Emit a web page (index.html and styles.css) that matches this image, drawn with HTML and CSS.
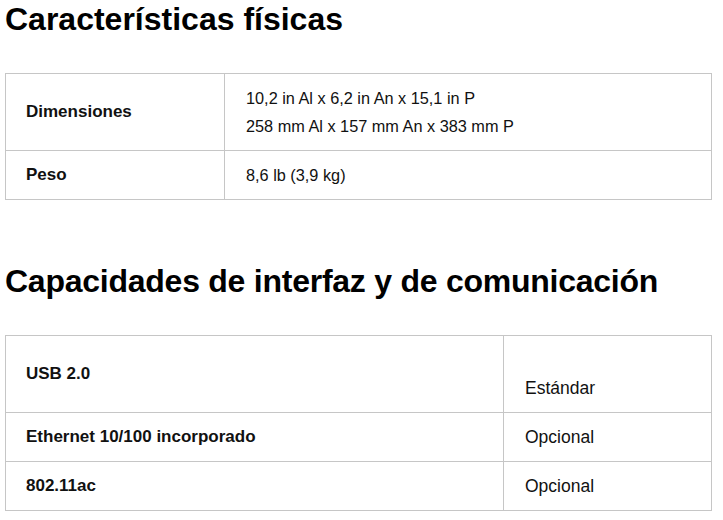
FILE: index.html
```html
<!DOCTYPE html>
<html lang="es">
<head>
<meta charset="utf-8">
<title>Especificaciones</title>
<link rel="stylesheet" href="styles.css">
</head>
<body>
<main class="page">
  <section class="spec">
    <h2 class="spec-title">Características físicas</h2>
    <table class="spec-table spec-table--phys">
      <colgroup><col class="c-label-a"><col class="c-value-a"></colgroup>
      <tbody>
        <tr>
          <th>Dimensiones</th>
          <td>10,2 in Al x 6,2 in An x 15,1 in P<br>258 mm Al x 157 mm An x 383 mm P</td>
        </tr>
        <tr>
          <th>Peso</th>
          <td>8,6 lb (3,9 kg)</td>
        </tr>
      </tbody>
    </table>
  </section>
  <section class="spec spec--second">
    <h2 class="spec-title">Capacidades de interfaz y de comunicación</h2>
    <table class="spec-table spec-table--io">
      <colgroup><col class="c-label-b"><col class="c-value-b"></colgroup>
      <tbody>
        <tr>
          <th>USB 2.0</th>
          <td><br>Estándar</td>
        </tr>
        <tr>
          <th>Ethernet 10/100 incorporado</th>
          <td>Opcional</td>
        </tr>
        <tr>
          <th>802.11ac</th>
          <td>Opcional</td>
        </tr>
      </tbody>
    </table>
  </section>
</main>
</body>
</html>
```
FILE: styles.css
```css
html, body {
  margin: 0;
  padding: 0;
  background: #ffffff;
}

body {
  font-family: "Liberation Sans", Arial, sans-serif;
  color: #111111;
}

.page {
  padding: 0 12px 0 5px;
}

.spec-title {
  margin: 0 0 35px 0;
  font-size: 32px;
  line-height: 38px;
  font-weight: 700;
  color: #000000;
}

.spec--second {
  margin-top: 62px;
}

.spec--second .spec-title {
  letter-spacing: -0.25px;
}

.spec-table {
  border-collapse: collapse;
  table-layout: fixed;
  width: 706px;
}

.c-label-a { width: 219px; }
.c-value-a { width: 487px; }
.c-label-b { width: 498px; }
.c-value-b { width: 208px; }

.spec-table th,
.spec-table td {
  border: 1px solid #c6c6c6;
  padding: 10px 20px 10px 20px;
  line-height: 28px;
  text-align: left;
  vertical-align: middle;
}

.spec-table th {
  font-weight: 700;
  font-size: 17px;
}

.spec-table td {
  font-weight: 400;
  font-size: 16.3px;
  padding-left: 21px;
}

.spec-table--io td {
  font-size: 17.5px;
}
```
